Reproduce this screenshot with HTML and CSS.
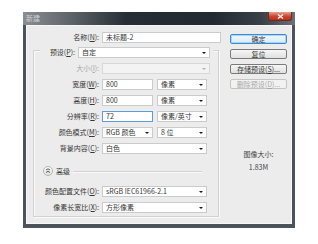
FILE: index.html
```html
<!DOCTYPE html>
<html lang="zh">
<head>
<meta charset="utf-8">
<title>新建</title>
<link rel="stylesheet" href="styles.css">
</head>
<body>
<div class="window">
  <div class="titlebar">
    <span class="title">新建</span>
    <span class="close"><svg width="7" height="5" viewBox="0 0 7 5"><path d="M1 0.5 L6 4.5 M6 0.5 L1 4.5" stroke="#fff" stroke-width="1.2"/></svg></span>
  </div>
  <div class="client">
    <div class="form">
      <div class="name-row">
        <span class="label">名称(<u>N</u>):</span>
        <div class="field input name">未标题-2</div>
      </div>
      <div class="group">
        <div class="preset-row">
          <span class="plabel">预设(<u>P</u>):</span>
          <div class="field select preset">自定<i class="arrow"></i></div>
        </div>
        <div class="row">
          <span class="label off">大小(<u>I</u>):</span>
          <div class="field select size off"><i class="arrow"></i></div>
        </div>
        <div class="row">
          <span class="label">宽度(<u>W</u>):</span>
          <div class="field input num">800</div>
          <div class="field select unit">像素<i class="arrow"></i></div>
        </div>
        <div class="row">
          <span class="label">高度(<u>H</u>):</span>
          <div class="field input num">800</div>
          <div class="field select unit">像素<i class="arrow"></i></div>
        </div>
        <div class="row">
          <span class="label">分辨率(<u>R</u>):</span>
          <div class="field input num focus">72</div>
          <div class="field select unit">像素/英寸<i class="arrow"></i></div>
        </div>
        <div class="row">
          <span class="label">颜色模式(<u>M</u>):</span>
          <div class="field select num">RGB 颜色<i class="arrow"></i></div>
          <div class="field select unit">8 位<i class="arrow"></i></div>
        </div>
        <div class="row">
          <span class="label">背景内容(<u>C</u>):</span>
          <div class="field select wide">白色<i class="arrow"></i></div>
        </div>
        <div class="adv-row">
          <span class="adv-btn"><svg width="6" height="6" viewBox="0 0 6 6"><path d="M1 2 L3 0.8 L5 2 M1 4.5 L3 3.3 L5 4.5" stroke="#444" stroke-width="0.9" fill="none"/></svg></span>
          <span class="adv-text">高级</span>
          <span class="adv-line"></span>
        </div>
        <div class="row first-adv">
          <span class="label">颜色配置文件(<u>O</u>):</span>
          <div class="field select wide">sRGB IEC61966-2.1<i class="arrow"></i></div>
        </div>
        <div class="row">
          <span class="label">像素长宽比(<u>X</u>):</span>
          <div class="field select wide">方形像素<i class="arrow"></i></div>
        </div>
      </div>
    </div>
    <div class="side">
      <div class="btn default">确定</div>
      <div class="btn">复位</div>
      <div class="btn">存储预设(<u>S</u>)...</div>
      <div class="btn off">删除预设(<u>D</u>)...</div>
      <div class="imgsize">
        <div>图像大小:</div>
        <div class="mb">1.83M</div>
      </div>
    </div>
  </div>
</div>
</body>
</html>
```
FILE: styles.css
```css
* { box-sizing: border-box; }
html, body { margin: 0; padding: 0; background: #fff; }
body {
  font-family: "Noto Sans CJK SC", "Liberation Sans", sans-serif;
  font-size: 7px;
  color: #363636;
  line-height: 1;
}
u { text-decoration: underline; text-underline-offset: 1px; }

.window {
  margin: 12px 0 0 23px;
  width: 272px;
  height: 216px;
  display: flex;
  flex-direction: column;
  background: #4d535a;
}
.titlebar {
  height: 13px;
  position: relative;
  background: linear-gradient(to right, #8a8e93 0%, #5d6268 18%, #262d34 38%, #222930 70%, #3b4148 88%, #6c7177 100%);
  display: flex;
  align-items: center;
  padding-left: 3px;
}
.title { color: #cfd2d6; font-size: 7px; }
.close {
  position: absolute;
  right: 3px;
  top: 0;
  width: 24px;
  height: 9px;
  border-radius: 0 0 3px 3px;
  background: linear-gradient(#e9a08f, #c9452e 55%, #b8321c);
  border: 1px solid #6b2a20;
  border-top: none;
  display: flex;
  align-items: center;
  justify-content: center;
}
.client {
  flex: 1;
  margin: 0 3px 4px 3px;
  background: #ececec;
  border: 1px solid #f7f7f7;
  display: flex;
  padding: 6px 0 0 6px;
}
.form { width: 188px; }

.name-row, .row, .preset-row { display: flex; align-items: center; height: 11px; }
.label { width: 66px; text-align: right; padding-right: 1px; white-space: nowrap; }
.name-row .label { width: 67px; }
.field {
  height: 11px;
  background: #fff;
  border: 1px solid #c9cbcd;
  display: flex;
  align-items: center;
  padding-left: 3px;
  position: relative;
  white-space: nowrap;
}
.name-row .field, .row .field { margin-left: 2px; }
.name { width: 119px; }

.group {
  margin-top: 7px;
  width: 186px;
  height: 167px;
  border: 1px solid #d2d2d2;
  box-shadow: inset 1px 1px 0 #fafafa, 1px 1px 0 #fafafa;
}
.preset-row {
  margin: -4px 5px 0 6px;
  background: #ececec;
  padding-right: 3px;
}
.plabel { width: 36px; text-align: right; padding-right: 1px; white-space: nowrap; }
.preset { width: 132px; margin-left: 2px; }
.row { margin-top: 5px; }
.size { width: 108px; }
.num { width: 51px; }
.unit { width: 50px; margin-left: 4px !important; }
.wide { width: 105px; }
.focus { border-color: #5c9fd8; }

.off { color: #a8a8a8; }
.field.off { background: #f3f3f3; border-color: #d8d8d8; }

.arrow {
  position: absolute;
  right: 3px;
  top: 4px;
  width: 0; height: 0;
  border-left: 2px solid transparent;
  border-right: 2px solid transparent;
  border-top: 2px solid #1e1e1e;
}
.field.off .arrow { border-top-color: #b0b0b0; }

.adv-row {
  display: flex;
  align-items: center;
  height: 10px;
  margin-top: 12px;
  padding-left: 9px;
  padding-right: 16px;
}
.adv-btn {
  width: 10px; height: 10px;
  border-radius: 50%;
  border: 1px solid #b5b5b5;
  background: linear-gradient(#fdfdfd, #e2e2e2);
  display: flex; align-items: center; justify-content: center;
}
.adv-text { margin-left: 3px; }
.adv-line { flex: 1; height: 1px; background: #d2d2d2; margin-left: 3px; box-shadow: 0 1px 0 #fafafa; }
.first-adv { margin-top: 10px; }

.side {
  margin-left: 9px;
  width: 57px;
  padding-top: 2px;
  display: flex;
  flex-direction: column;
}
.btn {
  height: 10px;
  margin-bottom: 5px;
  border: 1px solid #7a7a7a;
  border-radius: 2px;
  background: linear-gradient(#f6f6f6, #e0e0e0);
  display: flex; align-items: center; justify-content: center;
  white-space: nowrap;
}
.btn.default { border-color: #3c8ad0; box-shadow: inset 0 0 0 1px #a8d4f5; background: linear-gradient(#eef7fd, #d8ecf9); }
.btn.off { border-color: #c2c4c6; background: #f2f2f2; color: #a8a8a8; }
.imgsize {
  margin-top: 57px;
  text-align: center;
  color: #444;
}
.imgsize .mb { margin-top: 6px; }
```
